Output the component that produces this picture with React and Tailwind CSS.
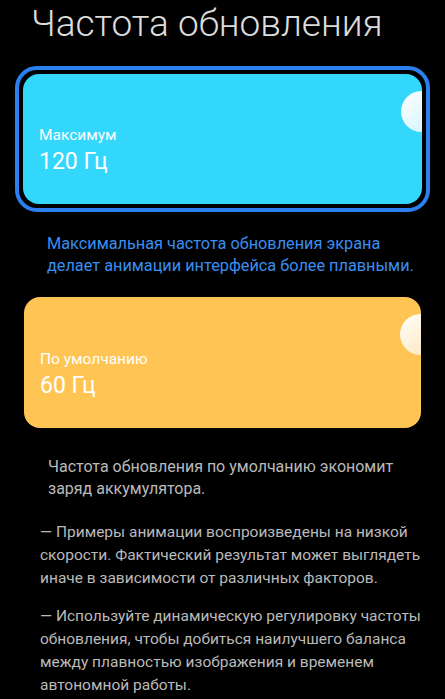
export default function App() {
  return (
    <div className="w-[445px] h-[699px] overflow-hidden bg-black font-['Roboto',sans-serif]">
      <h1 className="pl-[31px] pt-[2px] text-[37px] leading-[44px] font-light text-[#dcdcdc]">
        Частота обновления
      </h1>

      {/* selected card */}
      <div className="mx-[15px] mt-[20px] rounded-[22px] border-[4px] border-[#2b7fee] p-[4px]">
        <div className="relative h-[130px] overflow-hidden rounded-[16px] bg-[#33d7fc] pl-[16px] pt-[51px] text-white">
          <div className="absolute right-[-20px] top-[17px] h-[41px] w-[41px] rounded-full bg-gradient-to-br from-white to-[#c9f1fd]" />
          <div className="text-[15.5px] leading-[20px]">Максимум</div>
          <div className="mt-[3px] text-[23px] leading-[28px]">120 Гц</div>
        </div>
      </div>

      <p className="pl-[47px] pr-[20px] pt-[21px] text-[16.3px] leading-[22px] text-[#3a8ef0]">
        Максимальная частота обновления экрана делает анимации интерфейса более плавными.
      </p>

      <div className="relative mx-[24px] mt-[20px] h-[131px] overflow-hidden rounded-[16px] bg-[#ffc554] pl-[16px] pt-[52px] text-white">
        <div className="absolute right-[-20px] top-[17px] h-[41px] w-[41px] rounded-full bg-gradient-to-br from-white to-[#fbe2b0]" />
        <div className="text-[15.5px] leading-[20px]">По умолчанию</div>
        <div className="mt-[3px] text-[23px] leading-[28px]">60 Гц</div>
      </div>

      <p className="pl-[48px] pr-[30px] pt-[28px] text-[16px] leading-[22px] text-[#bababa]">
        Частота обновления по умолчанию экономит заряд аккумулятора.
      </p>

      <p className="pl-[40px] pr-[22px] pt-[21px] text-[15.5px] leading-[23px] text-[#bababa]">
        — Примеры анимации воспроизведены на низкой скорости. Фактический результат может выглядеть иначе в зависимости от различных факторов.
      </p>

      <p className="pl-[40px] pr-[22px] pt-[15px] text-[15.5px] leading-[23px] text-[#bababa]">
        — Используйте динамическую регулировку частоты обновления, чтобы добиться наилучшего баланса между плавностью изображения и временем автономной работы.
      </p>
    </div>
  )
}
